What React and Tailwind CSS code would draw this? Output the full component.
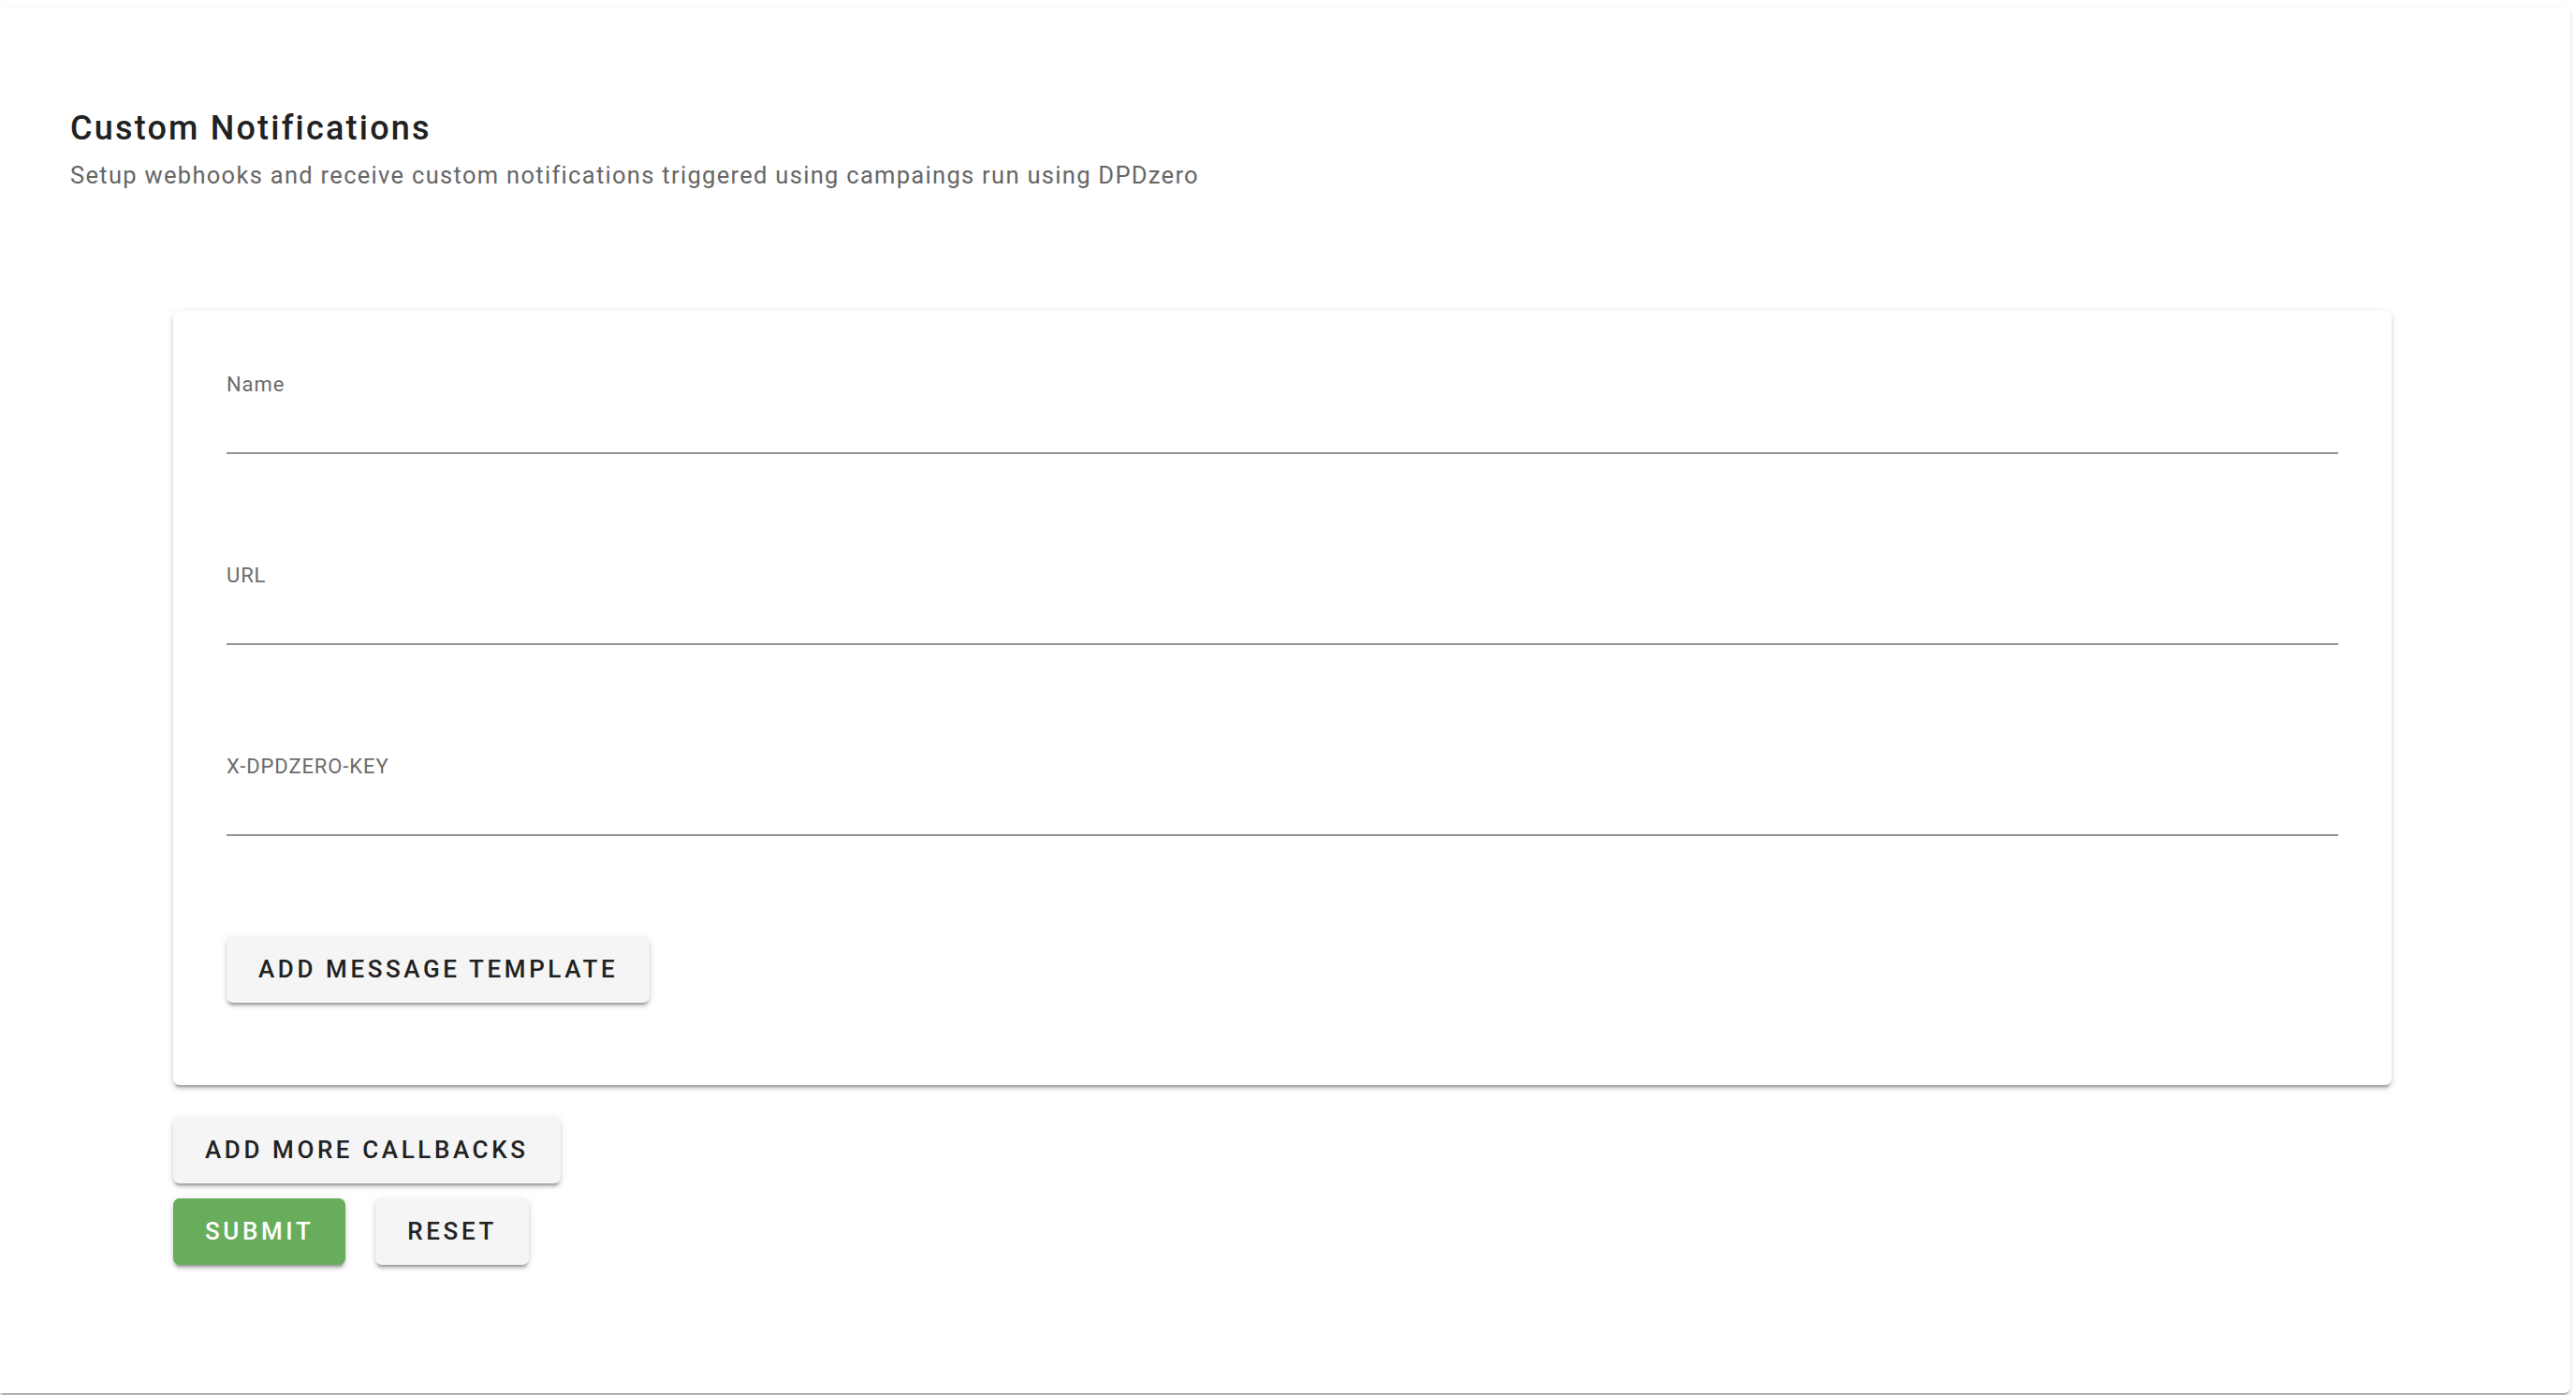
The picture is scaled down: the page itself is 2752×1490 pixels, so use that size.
import { useState } from "react";

const btnShadow =
  "shadow-[0_5px_2px_-3.5px_rgba(0,0,0,0.2),0_3.5px_3.5px_0_rgba(0,0,0,0.14),0_2px_9px_0_rgba(0,0,0,0.12)]";

const btnBase =
  "h-[71px] rounded-[7px] px-[34px] text-[26px] font-medium uppercase tracking-[3.6px] " + btnShadow;

function Field({ label, value, onChange }) {
  return (
    <div className="flex flex-col">
      <label className="text-[22px] leading-[22px] tracking-[0.9px] text-[#6b6b6b]">{label}</label>
      <input
        value={value}
        onChange={(e) => onChange(e.target.value)}
        className="h-[63px] w-full border-b-2 border-[#949494] bg-transparent text-[28px] text-[#212121] outline-none"
      />
    </div>
  );
}

export default function App() {
  const [form, setForm] = useState({ name: "", url: "", key: "" });

  const set = (k) => (v) => setForm({ ...form, [k]: v });

  return (
    <div className="h-[1490px] w-full bg-white pt-[8px] pr-[6px] pb-[2px] font-['Roboto','Liberation_Sans',sans-serif]">
      <div className="h-full rounded-r-[7px] bg-white shadow-[0_3.5px_2px_-2px_rgba(0,0,0,0.2),0_2px_2px_0_rgba(0,0,0,0.14),0_2px_5px_0_rgba(0,0,0,0.12)]">
        {/* Header */}
        <div className="pl-[75px] pt-[101px]">
          <h2 className="text-[36px] leading-[56px] font-medium tracking-[2.2px] text-[#212121]">
            Custom Notifications
          </h2>
          <p className="mt-[5px] text-[25.5px] leading-[35px] tracking-[1.3px] text-[#666666]">
            Setup webhooks and receive custom notifications triggered using campaings run using DPDzero
          </p>
        </div>

        <div className="ml-[185px] w-[2370px]">
          {/* Callback card */}
          <div className={"mt-[127px] rounded-[7px] bg-white px-[57px] pt-[68px] pb-[88px] " + btnShadow}>
            <div className="flex flex-col gap-[119px]">
              <Field label="Name" value={form.name} onChange={set("name")} />
              <Field label="URL" value={form.url} onChange={set("url")} />
              <Field label="X-DPDZERO-KEY" value={form.key} onChange={set("key")} />
            </div>
            <button className={"mt-[107px] bg-[#f5f5f5] text-[#212121] " + btnBase}>
              Add message template
            </button>
          </div>

          {/* Actions */}
          <div className="mt-[34px] flex flex-col items-start gap-[16px]">
            <button className={"bg-[#f5f5f5] text-[#212121] " + btnBase}>
              Add more callbacks
            </button>
            <div className="flex gap-[32px]">
              <button className={"bg-[#67ad5b] text-white " + btnBase}>
                Submit
              </button>
              <button
                onClick={() => setForm({ name: "", url: "", key: "" })}
                className={"bg-[#f5f5f5] text-[#212121] " + btnBase}
              >
                Reset
              </button>
            </div>
          </div>
        </div>
      </div>
    </div>
  );
}
